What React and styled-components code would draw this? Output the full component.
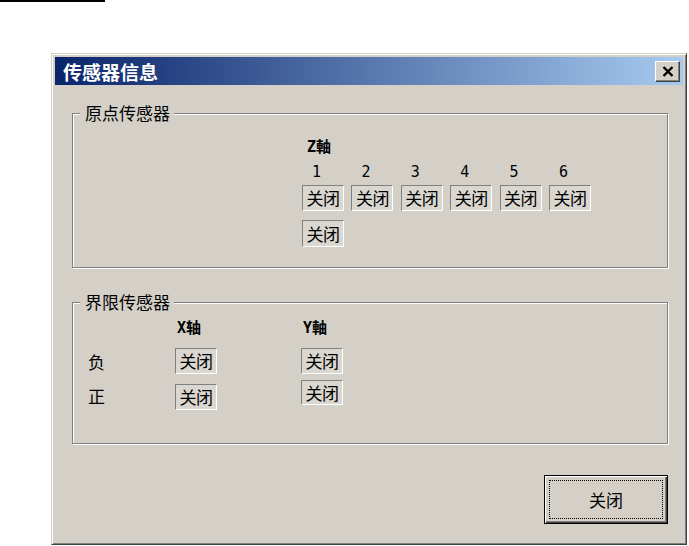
import React from "react";
import styled, { createGlobalStyle } from "styled-components";

const GlobalStyle = createGlobalStyle`
  html, body {
    margin: 0;
    padding: 0;
    background: #ffffff;
  }
  body {
    font-family: "Noto Sans CJK SC", "DejaVu Sans", sans-serif;
    color: #000;
  }
`;

const Page = styled.div`
  width: 689px;
  height: 546px;
  overflow: hidden;
`;

const TopRule = styled.div`
  width: 105px;
  height: 2px;
  background: #000;
`;

const Dialog = styled.div`
  box-sizing: border-box;
  margin: 51px 0 0 51px;
  width: 636px;
  height: 492px;
  background: #d4d0c8;
  border: 1px solid;
  border-color: #d4d0c8 #404040 #404040 #d4d0c8;
  box-shadow: inset 1px 1px 0 #ffffff, inset -1px -1px 0 #808080;
  padding: 3px;
  display: flex;
  flex-direction: column;
`;

const TitleBar = styled.div`
  height: 28px;
  display: flex;
  align-items: center;
  justify-content: space-between;
  padding: 0 3px 0 8px;
  background: linear-gradient(to right, #0a246a, #a6caf0);
`;

const Title = styled.span`
  color: #fff;
  font-size: 19px;
  font-weight: 700;
`;

const CloseX = styled.button`
  box-sizing: border-box;
  width: 25px;
  height: 21px;
  padding: 0;
  background: #d4d0c8;
  border: 1px solid;
  border-color: #ffffff #404040 #404040 #ffffff;
  box-shadow: inset -1px -1px 0 #808080;
  display: flex;
  align-items: center;
  justify-content: center;
`;

const Body = styled.div`
  flex: 1;
  display: flex;
  flex-direction: column;
  padding: 18px 15px 0 17px;
`;

const Group = styled.fieldset`
  box-sizing: border-box;
  margin: ${(p) => p.$top || 0}px 0 0 0;
  padding: 0;
  height: ${(p) => p.$height}px;
  border: 1px solid #808080;
  box-shadow: inset 1px 1px 0 #ffffff, 1px 1px 0 #ffffff;
  min-width: 0;
`;

const Legend = styled.legend`
  margin-left: 7px;
  padding: 0 4px 0 5px;
  font-size: 17px;
  line-height: 20px;
  background: #d4d0c8;
`;

const OriginGrid = styled.div`
  display: grid;
  grid-template-columns: repeat(6, 42px);
  column-gap: 7.4px;
  padding: 16px 0 0 229px;
`;

const AxisLabel = styled.div`
  font-size: 15px;
  line-height: 16px;
  font-weight: 700;
  font-family: "DejaVu Sans Mono", "Noto Sans CJK SC", monospace;
  grid-column: ${(p) => p.$span || "auto"};
  padding-left: ${(p) => p.$indent || 0}px;
`;

const Num = styled.div`
  font-family: "DejaVu Sans Mono", monospace;
  font-size: 15px;
  line-height: 16px;
  padding-left: 10px;
  margin-top: 9px;
`;

const StatusBox = styled.div`
  box-sizing: border-box;
  width: 42px;
  height: ${(p) => p.$h || 26}px;
  margin-top: ${(p) => p.$mt || 0}px;
  border: 1px solid;
  border-color: #808080 #ffffff #ffffff #808080;
  background: #dad7d0;
  font-size: 17px;
  line-height: ${(p) => (p.$h || 26) - 2}px;
  text-align: center;
  grid-column: ${(p) => p.$col || "auto"};
  white-space: nowrap;
  letter-spacing: -0.5px;
`;

const LimitGrid = styled.div`
  display: grid;
  grid-template-columns: 87px 126px 60px;
  padding: 8px 0 0 15px;
  align-items: start;
`;

const RowLabel = styled.div`
  font-size: 17px;
  line-height: 20px;
  margin-top: ${(p) => p.$mt || 0}px;
`;

const Footer = styled.div`
  display: flex;
  justify-content: flex-end;
  margin-top: 31px;
`;

const DefaultButton = styled.button`
  box-sizing: border-box;
  width: 124px;
  height: 49px;
  background: #d4d0c8;
  border: 1px solid #000;
  box-shadow: inset 1px 1px 0 #ffffff, inset -1px -1px 0 #404040,
    inset -2px -2px 0 #808080;
  font-family: "Noto Sans CJK SC", sans-serif;
  font-size: 17px;
  display: flex;
  padding: 4px;
`;

const Focus = styled.span`
  flex: 1;
  display: flex;
  align-items: center;
  justify-content: center;
  border: 1px dotted #000;
`;

export default function App() {
  const nums = [1, 2, 3, 4, 5, 6];
  return (
    <>
      <GlobalStyle />
      <Page>
        <TopRule />
        <Dialog>
          <TitleBar>
            <Title>传感器信息</Title>
            <CloseX aria-label="close">
              <svg width="12" height="11" viewBox="0 0 12 11">
                <path
                  d="M1.5 1 L10.5 10 M10.5 1 L1.5 10"
                  stroke="#000"
                  strokeWidth="2.4"
                  fill="none"
                />
              </svg>
            </CloseX>
          </TitleBar>
          <Body>
            <Group $height={165}>
              <Legend>原点传感器</Legend>
              <OriginGrid>
                <AxisLabel $span="1 / -1" $indent={5}>
                  Z軸
                </AxisLabel>
                {nums.map((n) => (
                  <Num key={n}>{n}</Num>
                ))}
                {nums.map((n) => (
                  <StatusBox key={n} $mt={5}>
                    关闭
                  </StatusBox>
                ))}
                <StatusBox $col="1" $h={27} $mt={9}>
                  关闭
                </StatusBox>
              </OriginGrid>
            </Group>
            <Group $height={152} $top={24}>
              <Legend>界限传感器</Legend>
              <LimitGrid>
                <div />
                <AxisLabel $indent={2}>X轴</AxisLabel>
                <AxisLabel $indent={2}>Y軸</AxisLabel>
                <RowLabel $mt={16}>负</RowLabel>
                <StatusBox $mt={12}>关闭</StatusBox>
                <StatusBox $mt={12}>关闭</StatusBox>
                <RowLabel $mt={12}>正</RowLabel>
                <StatusBox $mt={10}>关闭</StatusBox>
                <StatusBox $mt={6} $h={25}>
                  关闭
                </StatusBox>
              </LimitGrid>
            </Group>
            <Footer>
              <DefaultButton>
                <Focus>关闭</Focus>
              </DefaultButton>
            </Footer>
          </Body>
        </Dialog>
      </Page>
    </>
  );
}
